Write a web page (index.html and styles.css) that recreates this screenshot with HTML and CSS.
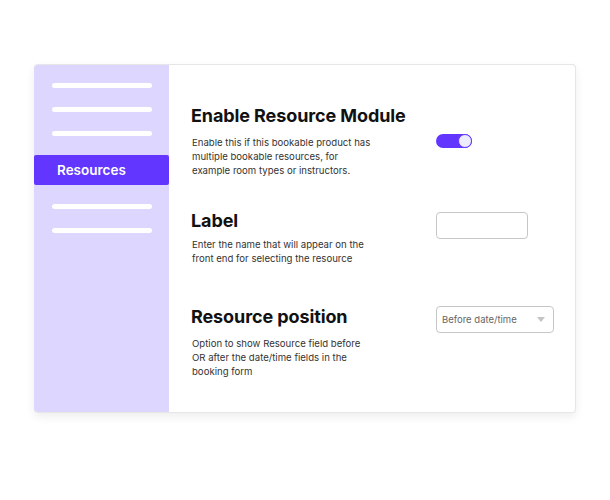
FILE: index.html
```html
<!DOCTYPE html>
<html>
<head>
<meta charset="utf-8">
<link rel="stylesheet" href="styles.css">
</head>
<body>
<div class="card">
  <aside class="sidebar">
    <span class="line"></span>
    <span class="line"></span>
    <span class="line"></span>
    <div class="active">Resources</div>
    <span class="line"></span>
    <span class="line"></span>
  </aside>
  <main class="content">
    <section class="row row-enable">
      <div class="text">
        <h2>Enable Resource Module</h2>
        <p>Enable this if this bookable product has<br>multiple bookable resources, for<br>example room types or instructors.</p>
      </div>
      <div class="control">
        <span class="toggle"><span class="knob"></span></span>
      </div>
    </section>
    <section class="row row-label">
      <div class="text">
        <h2>Label</h2>
        <p>Enter the name that will appear on the<br>front end for selecting the resource</p>
      </div>
      <div class="control">
        <span class="input"></span>
      </div>
    </section>
    <section class="row row-position">
      <div class="text">
        <h2>Resource position</h2>
        <p>Option to show Resource field before<br>OR after the date/time fields in the<br>booking form</p>
      </div>
      <div class="control">
        <span class="select">Before date/time<span class="arrow"></span></span>
      </div>
    </section>
  </main>
</div>
</body>
</html>
```
FILE: styles.css
```css
html, body {
  margin: 0;
  padding: 0;
  background: #ffffff;
}
body {
  width: 610px;
  height: 500px;
  font-family: Inter, "Noto Sans", sans-serif;
  color: #1a1a1a;
}
.card {
  display: flex;
  margin: 64px 0 0 34px;
  width: 542px;
  height: 349px;
  box-sizing: border-box;
  border: 1px solid #e6e6e6;
  border-left: none;
  border-radius: 4px;
  background: #fff;
  box-shadow: 0 4px 10px rgba(0, 0, 0, 0.07);
  overflow: hidden;
}
.sidebar {
  width: 135px;
  flex: none;
  background: #ddd6fe;
  display: flex;
  flex-direction: column;
  padding-top: 18px;
  gap: 19px;
  box-sizing: border-box;
}
.line {
  display: block;
  margin-left: 18px;
  width: 100px;
  height: 5px;
  border-radius: 3px;
  background: #ffffff;
}
.active {
  height: 30px;
  background: #6236ff;
  color: #fff;
  font-weight: 600;
  font-size: 13.5px;
  line-height: 30px;
  padding-left: 23px;
  border-radius: 2px;
}
.content {
  flex: 1;
  padding-left: 22px;
  padding-top: 40px;
}
.row {
  display: flex;
}
.text {
  width: 245px;
  flex: none;
}
h2 {
  margin: 0;
  font-size: 18px;
  line-height: 22px;
  font-weight: 700;
  color: #111;
  letter-spacing: -0.1px;
}
p {
  margin: 9px 0 0 1px;
  font-size: 9.6px;
  line-height: 14px;
  color: #333;
}
.row-label { margin-top: 32px; }
.row-label p { margin-top: 6px; }
.row-position { margin-top: 40px; }
.toggle {
  display: block;
  position: relative;
  margin-top: 29px;
  width: 36px;
  height: 14px;
  border-radius: 7px;
  background: #6236ff;
}
.knob {
  position: absolute;
  right: 0;
  top: 0;
  width: 14px;
  height: 14px;
  box-sizing: border-box;
  border-radius: 50%;
  background: #ececfd;
  border: 1.5px solid #6236ff;
}
.input {
  display: block;
  margin-top: 2px;
  width: 92px;
  height: 27px;
  box-sizing: border-box;
  border: 1px solid #c6c6c6;
  border-radius: 4px;
}
.select {
  display: flex;
  align-items: center;
  justify-content: space-between;
  margin-top: 0;
  width: 118px;
  height: 27px;
  box-sizing: border-box;
  border: 1px solid #c6c6c6;
  border-radius: 4px;
  padding: 0 8px 0 5px;
  font-size: 9.5px;
  color: #666;
}
.arrow {
  width: 0;
  height: 0;
  border-left: 4px solid transparent;
  border-right: 4px solid transparent;
  border-top: 5px solid #c4c4c4;
}
```
